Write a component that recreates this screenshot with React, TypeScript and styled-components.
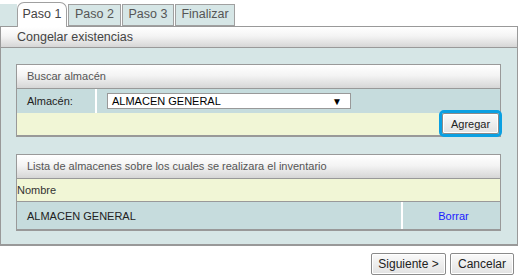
import React from 'react'
import styled, { createGlobalStyle } from 'styled-components'

const GlobalStyle = createGlobalStyle`
  body {
    margin: 0;
    background: #ffffff;
    font-family: 'Liberation Sans', Arial, sans-serif;
    color: #333;
  }
`

const Page = styled.div`
  width: 518px;
  height: 275px;
  overflow: hidden;
  padding-top: 1px;
  box-sizing: border-box;
`

const TabStrip = styled.div`
  display: flex;
  align-items: flex-end;
  height: 25px;
  position: relative;
  z-index: 1;
`

const TabLead = styled.div`
  width: 17px;
  height: 22px;
  background: #d6e6e6;
`

const Tab = styled.div<{ $active?: boolean; $w: number }>`
  width: ${(p) => p.$w}px;
  height: ${(p) => (p.$active ? '25px' : '22px')};
  margin-bottom: ${(p) => (p.$active ? '-1px' : '0')};
  margin-right: 1px;
  box-sizing: border-box;
  text-align: center;
  border: 1px solid #a0a0a0;
  border-bottom: ${(p) => (p.$active ? 'none' : '1px solid #a0a0a0')};
  border-radius: ${(p) => (p.$active ? '7px 7px 0 0' : '0')};
  background: ${(p) => (p.$active ? '#ffffff' : '#d6e6e6')};
  color: ${(p) => (p.$active ? '#444' : '#555')};
  font-size: 12.5px;
  line-height: ${(p) => (p.$active ? '21px' : '19px')};
  padding-top: ${(p) => (p.$active ? '1px' : '0')};
`

const Panel = styled.div`
  width: 516px;
  border: 1px solid #999;
  border-bottom-width: 2px;
  background: #d6e6e6;
`

const PanelTitle = styled.div`
  height: 20px;
  line-height: 20px;
  padding-left: 16px;
  font-size: 12.5px;
  color: #444;
  background: linear-gradient(#ffffff 0%, #f4f4f4 45%, #d6d6d6 100%);
  border-bottom: 1px solid #999;
`

const PanelBody = styled.div`
  padding: 16px 15px 13px 15px;
  display: flex;
  flex-direction: column;
  gap: 17px;
`

const Box = styled.div`
  width: 483px;
  border: 1px solid #999;
  border-bottom-width: 2px;
  background: #d6e6e6;
  font-size: 11px;
`

const BoxTitle = styled.div`
  height: 23px;
  line-height: 23px;
  padding-left: 10px;
  color: #555;
  background: linear-gradient(#ffffff 0%, #f4f4f4 45%, #d6d6d6 100%);
  border-bottom: 1px solid #999;
`

const Row = styled.div<{ $h: number }>`
  display: flex;
  height: ${(p) => p.$h}px;
  gap: 2px;
  background: #ffffff;
`

const Cell = styled.div<{ $w?: number; $pad?: number; $center?: boolean }>`
  ${(p) => (p.$w ? `width: ${p.$w}px;` : 'flex: 1;')}
  background: #c6dcdd;
  display: flex;
  align-items: center;
  justify-content: ${(p) => (p.$center ? 'center' : 'flex-start')};
  padding-left: ${(p) => p.$pad ?? 10}px;
  box-sizing: border-box;
  color: #222;
`

const Select = styled.div`
  width: 244px;
  height: 16px;
  box-sizing: border-box;
  border: 1px solid #999;
  background: #fff;
  display: flex;
  align-items: center;
  justify-content: space-between;
  padding: 0 8px 0 4px;
  font-size: 11px;
  color: #000;
`

const Arrow = styled.span`
  font-size: 10px;
  color: #000;
`

const ActionRow = styled.div`
  height: 22px;
  background: #f1f6d6;
  display: flex;
  justify-content: flex-end;
  align-items: flex-start;
`

const Button = styled.button<{ $focused?: boolean; $w: number }>`
  font-family: 'Liberation Sans', Arial, sans-serif;
  font-size: 12px;
  color: #222;
  width: ${(p) => p.$w}px;
  height: 22px;
  padding: 0;
  border: 1px solid #8a8a8a;
  border-radius: 2px;
  background: linear-gradient(#fafafa, #e2e2e2);
  box-shadow: inset 0 0 0 1px #fff;
  outline: ${(p) => (p.$focused ? '3px solid #0ba0e2' : 'none')};
  outline-offset: 0;
`

const AddButton = styled(Button)`
  margin-right: 1px;
  font-size: 11px;
  height: 21px;
`

const HeadRow = styled.div`
  height: 22px;
  line-height: 22px;
  background: #f1f6d6;
  color: #333;
  border-bottom: 1px solid #999;
`

const Link = styled.span`
  color: #1a1aff;
  margin-left: 4px;
`

const Footer = styled.div`
  display: flex;
  justify-content: flex-end;
  gap: 4px;
  padding: 7px 4px 0 0;
`

export default function App() {
  return (
    <Page>
      <GlobalStyle />
      <TabStrip>
        <TabLead />
        <Tab $active $w={50}>Paso 1</Tab>
        <Tab $w={53}>Paso 2</Tab>
        <Tab $w={52}>Paso 3</Tab>
        <Tab $w={60}>Finalizar</Tab>
      </TabStrip>
      <Panel>
        <PanelTitle>Congelar existencias</PanelTitle>
        <PanelBody>
          <Box>
            <BoxTitle>Buscar almacén</BoxTitle>
            <Row $h={24}>
              <Cell $w={78}>Almacén:</Cell>
              <Cell $pad={10}>
                <Select>
                  <span>ALMACEN GENERAL</span>
                  <Arrow>▼</Arrow>
                </Select>
              </Cell>
            </Row>
            <ActionRow>
              <AddButton $focused $w={57}>Agregar</AddButton>
            </ActionRow>
          </Box>
          <Box>
            <BoxTitle>Lista de almacenes sobre los cuales se realizara el inventario</BoxTitle>
            <HeadRow>Nombre</HeadRow>
            <Row $h={27}>
              <Cell>ALMACEN GENERAL</Cell>
              <Cell $w={97} $pad={0} $center>
                <Link>Borrar</Link>
              </Cell>
            </Row>
          </Box>
        </PanelBody>
      </Panel>
      <Footer>
        <Button $w={75}>Siguiente &gt;</Button>
        <Button $w={64}>Cancelar</Button>
      </Footer>
    </Page>
  )
}
